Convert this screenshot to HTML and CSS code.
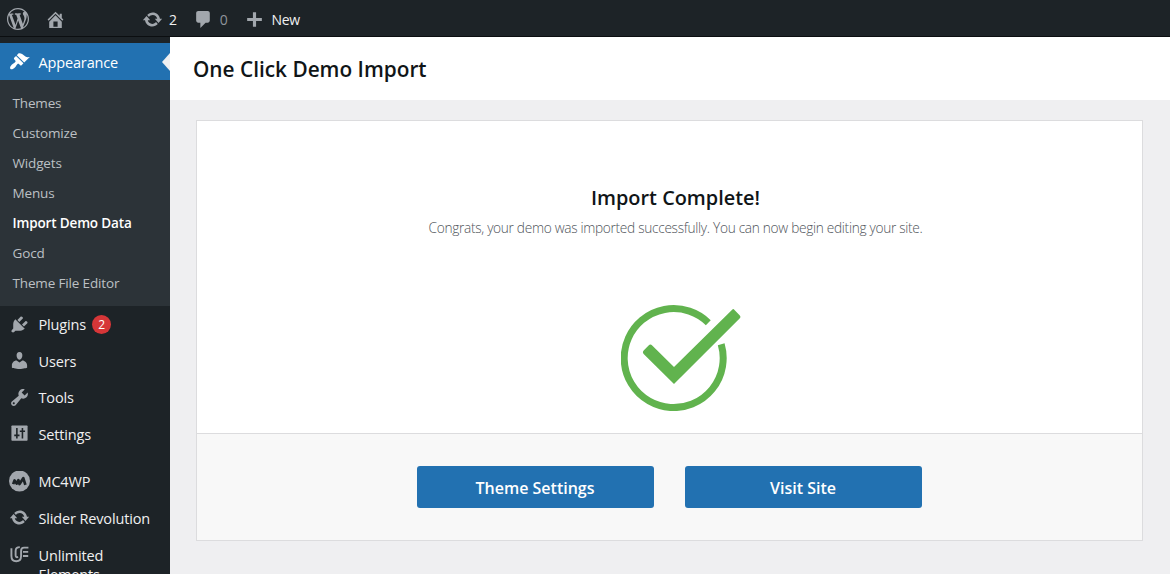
FILE: index.html
```
<!DOCTYPE html>
<html lang="en">
<head>
<meta charset="utf-8">
<title>One Click Demo Import</title>
<link rel="stylesheet" href="styles.css">
</head>
<body>
<header class="adminbar">
  <svg class="icon wp" viewBox="0 0 20 20"><path d="M20 10c0-5.51-4.49-10-10-10C4.48 0 0 4.49 0 10c0 5.52 4.48 10 10 10 5.51 0 10-4.48 10-10zM7.78 15.37L4.37 6.22c.55-.02 1.17-.08 1.17-.08.5-.06.44-1.13-.06-1.11 0 0-1.45.11-2.37.11-.18 0-.37 0-.58-.01C4.12 2.69 6.87 1.11 10 1.11c2.33 0 4.45.87 6.05 2.34-.68-.11-1.65.39-1.65 1.58 0 .74.45 1.36.9 2.1.35.61.55 1.36.55 2.46 0 1.49-1.4 5-1.4 5l-3.03-8.37c.54-.02.82-.17.82-.17.5-.05.44-1.25-.06-1.22 0 0-1.44.12-2.38.12-.87 0-2.33-.12-2.33-.12-.5-.03-.56 1.2-.06 1.22l.92.08 1.26 3.41zM17.41 10c.24-.64.74-1.87.43-4.25.7 1.29 1.05 2.71 1.05 4.25 0 3.29-1.73 6.24-4.4 7.78.97-2.59 1.94-5.2 2.92-7.78zM6.1 18.09C3.12 16.65 1.11 13.53 1.11 10c0-1.3.23-2.48.72-3.59C3.25 10.3 4.67 14.2 6.1 18.09zm4.03-6.63l2.58 6.98c-.86.29-1.76.45-2.71.45-.79 0-1.57-.11-2.29-.33.81-2.38 1.62-4.74 2.42-7.1z"/></svg>
  <svg class="icon home" viewBox="0 0 20 20"><path d="M16 8.5l1.53 1.53-1.06 1.06L10 4.6l-6.47 6.49-1.06-1.06L10 2.5l4 4v-2h2v4zm-6-2.46l6 5.99V18H4v-5.97zM12 17v-5H8v5h4z"/></svg>
  <svg class="icon update" viewBox="0 0 20 20"><path d="M10.2 3.28c3.53 0 6.43 2.61 6.92 6h2.08l-3.5 4-3.5-4h2.32c-.45-1.97-2.21-3.45-4.32-3.45-1.45 0-2.73.71-3.54 1.78L4.95 5.66C6.23 4.2 8.11 3.28 10.2 3.28zm-.4 13.44c-3.52 0-6.43-2.61-6.92-6H.8l3.5-4c1.17 1.33 2.33 2.67 3.5 4H5.48c.45 1.97 2.21 3.45 4.32 3.45 1.45 0 2.73-.71 3.54-1.78l1.71 1.95c-1.28 1.46-3.15 2.38-5.25 2.38z"/></svg>
  <span class="bar-text updates">2</span>
  <svg class="icon comments" viewBox="0 0 20 20"><path d="M5 2h9c1.1 0 2 .9 2 2v7c0 1.1-.9 2-2 2h-2l-5 5v-5H5c-1.1 0-2-.9-2-2V4c0-1.1.9-2 2-2z"/></svg>
  <span class="bar-text muted">0</span>
  <svg class="icon plus" viewBox="0 0 20 20"><path d="M17 8.5v3h-5.5V17h-3v-5.500H3v-3h5.500V3h3v5.500z"/></svg>
  <span class="bar-text">New</span>
</header>
<div class="layout">
  <nav class="sidebar">
    <a class="item active"><svg class="icon" viewBox="0 0 20 20"><path d="M14.48 11.06L7.41 3.99l1.5-1.5c.5-.56 2.3-.47 3.51.32 1.21.8 1.43 1.28 2.91 2.1 1.18.64 2.45 1.26 4.45.85zm-.71.71L6.7 4.7 4.93 6.47c-.39.39-.39 1.02 0 1.41l1.06 1.06c.39.39.39 1.03 0 1.42-.6.6-1.43 1.11-2.21 1.69-.35.26-.7.53-1.01.84C1.43 14.23.4 16.08 1.4 17.07c.99 1 2.84-.03 4.18-1.36.31-.31.58-.66.85-1.02.57-.78 1.08-1.61 1.69-2.21.39-.39 1.02-.39 1.41 0l1.06 1.06c.39.39 1.02.39 1.41 0z"/></svg><span>Appearance</span></a>
    <div class="submenu">
      <a>Themes</a><a>Customize</a><a>Widgets</a><a>Menus</a><a class="current">Import Demo Data</a><a>Gocd</a><a>Theme File Editor</a>
    </div>
    <a class="item"><svg class="icon" viewBox="0 0 20 20"><path d="M13.11 4.36L9.87 7.6 8 5.73l3.24-3.24c.35-.34 1.05-.2 1.56.32.52.51.66 1.21.31 1.55zm-8 1.77l.91-1.12 9.01 9.01-1.19.84c-.71.71-2.63 1.16-3.82 1.16H6.14L4.9 17.26c-.59.59-1.54.59-2.12 0-.59-.58-.59-1.53 0-2.12l1.24-1.24v-3.88c0-1.13.4-3.19 1.09-3.89zm7.26 3.97l3.24-3.24c.34-.35 1.04-.21 1.55.31.52.51.66 1.21.31 1.55l-3.24 3.25z"/></svg><span>Plugins</span><span class="badge">2</span></a>
    <a class="item"><svg class="icon" viewBox="0 0 20 20"><path d="M10 9.25c-2.27 0-2.73-3.44-2.73-3.44C7 4.02 7.82 2 9.97 2c2.16 0 2.98 2.02 2.71 3.81 0 0-.41 3.44-2.68 3.44zm0 2.57L12.72 10c2.39 0 4.52 2.33 4.52 4.53v2.49s-3.65 1.13-7.24 1.13c-3.65 0-7.24-1.13-7.24-1.13v-2.49c0-2.25 1.94-4.48 4.47-4.48z"/></svg><span>Users</span></a>
    <a class="item"><svg class="icon" viewBox="0 0 20 20"><path d="M16.68 9.77c-1.34 1.34-3.3 1.67-4.95.99l-5.41 6.52c-.99.99-2.59.99-3.58 0s-.99-2.59 0-3.57l6.52-5.42c-.68-1.65-.35-3.61.99-4.95 1.28-1.28 3.12-1.62 4.72-1.06l-2.89 2.89 2.82 2.82 2.86-2.87c.53 1.58.18 3.39-1.08 4.65zM3.81 16.21c.4.39 1.04.39 1.43 0 .4-.4.4-1.04 0-1.43-.39-.4-1.03-.4-1.43 0-.39.39-.39 1.03 0 1.43z"/></svg><span>Tools</span></a>
    <a class="item"><svg class="icon" viewBox="0 0 20 20"><path d="M3 2.300h14q.7 0 .7.700v13.200q0 .7-.7.700H3q-.7 0-.7-.7V3q0-.7.700-.7z"/><path class="cut" d="M7.500 4.800v10M5 11.800h5M12.800 4.800v10M10.300 7.800h5"/></svg><span>Settings</span></a>
    <a class="item spaced"><svg class="icon" viewBox="0 0 20 20"><circle cx="10" cy="9.500" r="10"/><path class="cut mark" d="M4 12.500L5.300 9l2 3 1.600-3.200 1.100 3.600 3.600-5.600 2 6.400"/></svg><span>MC4WP</span></a>
    <a class="item"><svg class="icon" viewBox="0 0 20 20"><path d="M10.200 3.280c3.530 0 6.430 2.610 6.920 6h2.080l-3.500 4-3.500-4h2.320c-.45-1.970-2.210-3.450-4.320-3.450-1.450 0-2.730.71-3.540 1.780L4.950 5.660C6.230 4.200 8.110 3.280 10.200 3.280zm-.4 13.440c-3.520 0-6.430-2.610-6.920-6H.8l3.500-4c1.170 1.330 2.330 2.670 3.500 4H5.480c.45 1.970 2.210 3.450 4.320 3.450 1.450 0 2.730-.71 3.540-1.780l1.710 1.950c-1.280 1.460-3.150 2.380-5.250 2.380z"/></svg><span>Slider Revolution</span></a>
    <a class="item tall"><svg class="icon" viewBox="0 0 20 20"><path class="line" d="M2.300 3v7.500q0 5 4.600 5t4.600-5V5.600q0-3.100 2.800-3.100h4.200M8.700 11.400q-2.400 1-2.400-1.600V5.600q0-3.600 4-3.600M13.300 6.500h5M13.300 10.500h5"/></svg><span>Unlimited<br>Elements</span></a>
  </nav>
  <main class="content">
    <div class="page-head"><h1>One Click Demo Import</h1></div>
    <section class="card">
      <div class="card-body">
        <h2>Import Complete!</h2>
        <p>Congrats, your demo was imported successfully. You can now begin editing your site.</p>
        <svg class="check" viewBox="0 0 120 106"><path class="ring" d="M87.300 17.700A49.500 49.500 0 1 0 100.200 39.200"/><path class="tick" d="M111.400 4.400L53 62 31.200 40.500q-1.800-1.800-3.600 0l-4.700 4.700q-2 2 0 4L53 79l65.600-65.500q1.600-1.600 0-3.200l-5.800-6q-.7-.7-1.400.1z"/></svg>
      </div>
      <div class="card-foot"><a class="button">Theme Settings</a><a class="button">Visit Site</a></div>
    </section>
  </main>
</div>
</body>
</html>
```
FILE: styles.css
```
* { box-sizing: border-box; }
body {
  margin: 0;
  width: 1170px;
  height: 574px;
  overflow: hidden;
  display: flex;
  flex-direction: column;
  background: #efeff1;
  font-family: "Open Sans", "Noto Sans", sans-serif;
  font-size: 14px;
  color: #101517;
}
.icon { display: block; width: 21px; height: 21px; flex: none; fill: #a2a7ad; }
.adminbar {
  height: 37px;
  flex: none;
  display: flex;
  align-items: center;
  padding: 2px 0 0 7px;
  background: #1d2327;
  border-bottom: 1px solid #0b0e10;
}
.adminbar .wp { width: 22px; height: 22px; }
.adminbar .home { margin-left: 16px; }
.adminbar .update { margin-left: 76px; }
.adminbar .comments { margin-left: 16px; }
.adminbar .plus { margin-left: 17px; }
.bar-text { color: #f0f0f1; font-size: 14px; line-height: 20px; margin-left: 6px; letter-spacing: -0.3px; padding-top: 1px; }
.bar-text.muted { color: #8f959b; }
.layout { flex: 1; min-height: 0; display: flex; }
.sidebar {
  width: 170px;
  flex: none;
  padding-top: 6px;
  background: #1d2327;
  overflow: hidden;
}
.item {
  height: 36.500px;
  display: flex;
  align-items: center;
  padding-left: 8.500px;
  color: #f0f0f1;
  font-size: 14.500px;
  letter-spacing: -0.150px;
  line-height: 19px;
}
.item span:first-of-type { margin-left: 9px; padding-top: 1px; }
.item.active { height: 37px; background: #2271b1; color: #fff; position: relative; }
.item.active .icon { fill: #fff; }
.item.active::after {
  content: "";
  position: absolute;
  right: 0;
  top: 10px;
  border: 9px solid transparent;
  border-left: 0;
  border-right: 8px solid #f0f0f1;
}
.item.spaced { margin-top: 11px; }
.item.tall { height: auto; align-items: flex-start; padding-top: 8.500px; }
.submenu {
  height: 226px;
  padding: 8px 0 8px 12.500px;
  background: #2c3338;
  display: flex;
  flex-direction: column;
}
.submenu a { height: 30px; line-height: 30px; font-size: 13.500px; letter-spacing: -0.150px; color: #bcc0c4; white-space: nowrap; }
.submenu .current { color: #fff; font-weight: 600; }
.item .badge {
  width: 19px;
  height: 19px;
  margin-left: 6px;
  border-radius: 50%;
  background: #d63638;
  color: #fff;
  font-size: 12px;
  text-align: center;
}
.cut { fill: none; stroke: #1d2327; stroke-width: 1.500; }
.mark { stroke-width: 2.600; stroke-linejoin: round; }
.line { fill: none; stroke: #a2a7ad; stroke-width: 1.800; }
.content { flex: 1; min-width: 0; }
.page-head { height: 63px; padding-left: 23px; background: #fff; display: flex; align-items: center; }
h1 { margin: 0; font-size: 20.800px; line-height: 28px; font-weight: 600; }
.card { width: 947px; height: 421px; margin: 20px 0 0 26px; border: 1px solid #dcdcde; background: #fff; }
.card-body { height: 312px; display: flex; flex-direction: column; align-items: center; padding: 63px 0 0 12px; }
h2 { margin: 0; font-size: 19.900px; line-height: 28px; font-weight: 600; }
p { margin: 6px 0 0; font-size: 13.700px; letter-spacing: -0.310px; line-height: 20px; font-weight: 300; color: #50555b; white-space: nowrap; }
.check { width: 120px; height: 106px; margin: 67px 0 0 11px; }
.ring { fill: none; stroke: #61b34e; stroke-width: 7; }
.tick { fill: #61b34e; }
.card-foot {
  height: 107px;
  display: flex;
  justify-content: center;
  align-items: center;
  gap: 31px;
  padding-right: 1px;
  border-top: 1px solid #dcdcde;
  background: #f8f8f8;
}
.button {
  width: 237px;
  height: 42px;
  border-radius: 3px;
  background: #2271b1;
  color: #fff;
  font-size: 16px;
  line-height: 44px;
  font-weight: 600;
  text-align: center;
}
```
